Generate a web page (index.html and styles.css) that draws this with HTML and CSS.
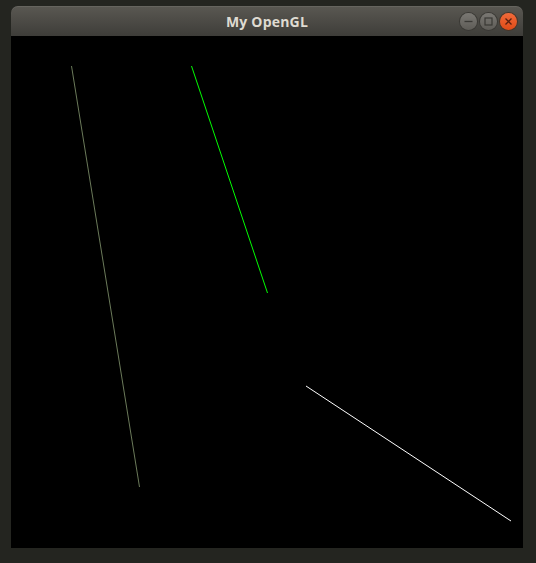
FILE: index.html
```html
<!DOCTYPE html>
<html>
<head>
<meta charset="utf-8">
<link rel="stylesheet" href="styles.css">
</head>
<body>
<div class="window">
  <div class="titlebar">
    <div class="spacer"></div>
    <div class="title">My OpenGL</div>
    <div class="buttons">
      <span class="btn btn-min">
        <svg width="17" height="17" viewBox="0 0 17 17"><line x1="4.5" y1="8.5" x2="12.5" y2="8.5" stroke="#3a3935" stroke-width="1.3"/></svg>
      </span>
      <span class="btn btn-max">
        <svg width="17" height="17" viewBox="0 0 17 17"><rect x="5" y="5" width="7" height="7" fill="none" stroke="#3a3935" stroke-width="1.2"/></svg>
      </span>
      <span class="btn btn-close">
        <svg width="17" height="17" viewBox="0 0 17 17"><path d="M5.5 5.5 L11.5 11.5 M11.5 5.5 L5.5 11.5" stroke="#5a2010" stroke-width="1.3"/></svg>
      </span>
    </div>
  </div>
  <svg class="canvas" width="512" height="512" viewBox="0 0 512 512">
    <rect width="512" height="512" fill="#000"/>
    <line x1="60.5" y1="30" x2="128.5" y2="451" stroke="#6b7a5a" stroke-width="1"/>
    <line x1="180.5" y1="30" x2="256.5" y2="257" stroke="#00ff00" stroke-width="1"/>
    <line x1="295" y1="350" x2="500" y2="485" stroke="#ffffff" stroke-width="1"/>
  </svg>
</div>
</body>
</html>
```
FILE: styles.css
```css
html, body {
  margin: 0;
  padding: 0;
  background: #242520;
}
body {
  padding: 6px 0 0 11px;
  height: 563px;
  box-sizing: border-box;
  overflow: hidden;
}
.window {
  width: 512px;
  display: flex;
  flex-direction: column;
}
.titlebar {
  height: 30px;
  border-radius: 7px 7px 0 0;
  background: linear-gradient(#5a5852, #3e3d39);
  display: grid;
  grid-template-columns: 1fr auto 1fr;
  align-items: center;
  box-shadow: inset 0 1px 0 rgba(255,255,255,0.08);
}
.title {
  font-family: "Open Sans", "DejaVu Sans", sans-serif;
  font-weight: 700;
  font-size: 14px;
  color: #dfdbd2;
  letter-spacing: 0.2px;
  padding-top: 0px;
}
.buttons {
  display: flex;
  justify-content: flex-end;
  gap: 3px;
  padding-right: 6px;
  padding-top: 1px;
}
.btn {
  width: 17px;
  height: 17px;
  border-radius: 50%;
  display: block;
  box-sizing: border-box;
}
.btn svg { display: block; }
.btn-min, .btn-max {
  background: linear-gradient(#7a7873, #5e5c57);
  box-shadow: 0 0 0 1px #3a3935;
}
.btn-close {
  background: linear-gradient(#f26a3a, #df4b17);
  box-shadow: 0 0 0 1px #4a3426;
}
.canvas {
  display: block;
}
```
